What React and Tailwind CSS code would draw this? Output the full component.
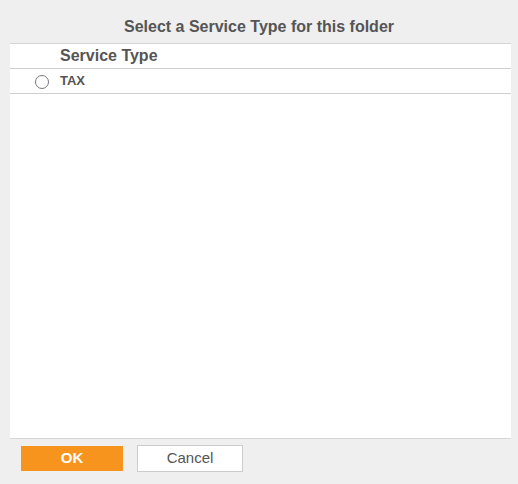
import React from 'react';

export default function App() {
  return (
    <div className="w-[518px] h-[484px] bg-[#efefef] flex flex-col font-['Liberation_Sans',Arial,sans-serif]">
      {/* Title */}
      <div className="h-[43px] flex items-center justify-center pt-[10px]">
        <h1 className="text-[16px] font-bold text-[#555555]">Select a Service Type for this folder</h1>
      </div>

      {/* List panel */}
      <div className="mx-[10px] w-[501px] h-[396px] bg-white border-t border-b border-[#d6d6d6] flex flex-col">
        <div className="h-[25px] flex items-center border-b border-[#cfcfcf]">
          <span className="pl-[50px] text-[16px] font-bold text-[#555555]">Service Type</span>
        </div>
        <label className="h-[25px] flex items-center border-b border-[#cfcfcf] cursor-pointer">
          <span className="ml-[25px] mt-[2px] w-[14px] h-[14px] rounded-full border border-[#777777] bg-white"></span>
          <span className="ml-[11px] text-[13px] font-bold text-[#555555]">TAX</span>
        </label>
      </div>

      {/* Buttons */}
      <div className="flex items-center gap-[14px] pl-[21px] pt-[6px]">
        <button className="w-[102px] h-[25px] bg-[#f7941d] text-white text-[15px] font-bold">OK</button>
        <button className="w-[106px] h-[27px] bg-white border border-[#cccccc] text-[#555555] text-[15px]">Cancel</button>
      </div>
    </div>
  );
}
